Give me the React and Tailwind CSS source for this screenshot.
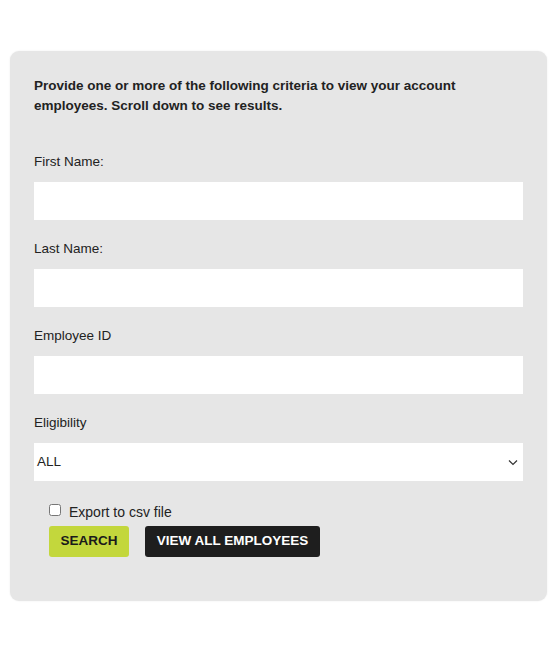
import React from "react";

function Field({ label }) {
  return (
    <div className="flex flex-col">
      <label className="text-[13.5px] leading-4 text-[#222]">{label}</label>
      <input className="mt-3 h-[38px] w-full bg-white outline-none" />
    </div>
  );
}

export default function App() {
  return (
    <div className="w-[558px] h-[656px] bg-white pt-[51px] pl-[10px] font-['Liberation_Sans',Arial,sans-serif]">
      <div className="w-[537px] h-[550px] rounded-[9px] bg-[#e6e6e6] shadow-[0_0_2px_rgba(0,0,0,0.08)] px-6 pt-[25px]">
        <p className="text-[13.5px] leading-5 font-bold text-[#222] pr-4">
          Provide one or more of the following criteria to view your account employees. Scroll down to see results.
        </p>
        <div className="mt-[38px] flex flex-col gap-[21px]">
          <Field label="First Name:" />
          <Field label="Last Name:" />
          <Field label="Employee ID" />
          <div className="flex flex-col">
            <label className="text-[13.5px] leading-4 text-[#222]">Eligibility</label>
            <div className="mt-3 h-[38px] w-full bg-white flex items-center justify-between pl-[3px] pr-[3px]">
              <span className="text-[13.5px] text-[#222]">ALL</span>
              <svg width="14" height="14" viewBox="0 0 14 14" fill="none" stroke="#333" strokeWidth="1.2">
                <path d="M3 5.5 L7 9.5 L11 5.5" />
              </svg>
            </div>
          </div>
        </div>
        <div className="mt-[23px] pl-[15px]">
          <div className="flex items-center h-[16px]">
            <input type="checkbox" className="m-0 w-[12px] h-[12px] -mt-[5px]" />
            <span className="ml-[8px] text-[14px] text-[#222]">Export to csv file</span>
          </div>
          <div className="mt-[6px] flex gap-4">
            <button className="h-[31px] w-[80px] rounded-[3px] bg-[#c3d73c] text-[13.5px] font-bold text-[#1a1a1a]">
              SEARCH
            </button>
            <button className="h-[31px] w-[175px] rounded-[3px] bg-[#1e1e1e] text-[13.5px] font-bold text-white">
              VIEW ALL EMPLOYEES
            </button>
          </div>
        </div>
      </div>
    </div>
  );
}
